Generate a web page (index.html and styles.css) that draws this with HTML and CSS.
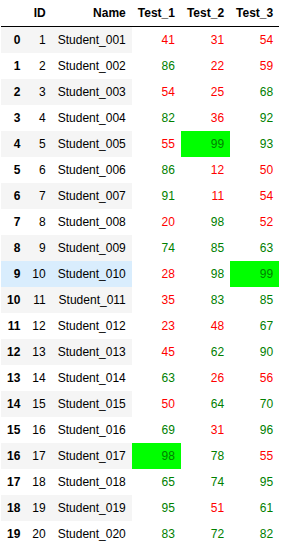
FILE: index.html
```html
<!DOCTYPE html>
<html>
<head>
<meta charset="utf-8">
<link rel="stylesheet" href="styles.css">
</head>
<body>
<table class="df">
<thead>
<tr><th class="blank"></th><th>ID</th><th>Name</th><th>Test_1</th><th>Test_2</th><th>Test_3</th></tr>
</thead>
<tbody>
<tr><th>0</th><td>1</td><td>Student_001</td><td class="s bad">41</td><td class="s bad">31</td><td class="s bad">54</td></tr>
<tr><th>1</th><td>2</td><td>Student_002</td><td class="s ok">86</td><td class="s bad">22</td><td class="s bad">59</td></tr>
<tr><th>2</th><td>3</td><td>Student_003</td><td class="s bad">54</td><td class="s bad">25</td><td class="s ok">68</td></tr>
<tr><th>3</th><td>4</td><td>Student_004</td><td class="s ok">82</td><td class="s bad">36</td><td class="s ok">92</td></tr>
<tr><th>4</th><td>5</td><td>Student_005</td><td class="s bad">55</td><td class="s ok max">99</td><td class="s ok">93</td></tr>
<tr><th>5</th><td>6</td><td>Student_006</td><td class="s ok">86</td><td class="s bad">12</td><td class="s bad">50</td></tr>
<tr><th>6</th><td>7</td><td>Student_007</td><td class="s ok">91</td><td class="s bad">11</td><td class="s bad">54</td></tr>
<tr><th>7</th><td>8</td><td>Student_008</td><td class="s bad">20</td><td class="s ok">98</td><td class="s bad">52</td></tr>
<tr><th>8</th><td>9</td><td>Student_009</td><td class="s ok">74</td><td class="s ok">85</td><td class="s ok">63</td></tr>
<tr class="hover"><th>9</th><td>10</td><td>Student_010</td><td class="s bad">28</td><td class="s ok">98</td><td class="s ok max">99</td></tr>
<tr><th>10</th><td>11</td><td>Student_011</td><td class="s bad">35</td><td class="s ok">83</td><td class="s ok">85</td></tr>
<tr><th>11</th><td>12</td><td>Student_012</td><td class="s bad">23</td><td class="s bad">48</td><td class="s ok">67</td></tr>
<tr><th>12</th><td>13</td><td>Student_013</td><td class="s bad">45</td><td class="s ok">62</td><td class="s ok">90</td></tr>
<tr><th>13</th><td>14</td><td>Student_014</td><td class="s ok">63</td><td class="s bad">26</td><td class="s bad">56</td></tr>
<tr><th>14</th><td>15</td><td>Student_015</td><td class="s bad">50</td><td class="s ok">64</td><td class="s ok">70</td></tr>
<tr><th>15</th><td>16</td><td>Student_016</td><td class="s ok">69</td><td class="s bad">31</td><td class="s ok">96</td></tr>
<tr><th>16</th><td>17</td><td>Student_017</td><td class="s ok max">98</td><td class="s ok">78</td><td class="s bad">55</td></tr>
<tr><th>17</th><td>18</td><td>Student_018</td><td class="s ok">65</td><td class="s ok">74</td><td class="s ok">95</td></tr>
<tr><th>18</th><td>19</td><td>Student_019</td><td class="s ok">95</td><td class="s bad">51</td><td class="s ok">61</td></tr>
<tr><th>19</th><td>20</td><td>Student_020</td><td class="s ok">83</td><td class="s ok">72</td><td class="s ok">82</td></tr>
</tbody>
</table>
</body>
</html>
```
FILE: styles.css
```css
html, body {
  margin: 0;
  padding: 0;
  background: #fff;
}
body {
  padding-left: 1px;
  font-family: "Liberation Sans", Arial, sans-serif;
  font-size: 12px;
  color: #000;
}
.df {
  border-collapse: collapse;
  border-spacing: 0;
  border: none;
  table-layout: auto;
}
.df th,
.df td {
  text-align: right;
  vertical-align: middle;
  padding: 6px;
  line-height: 14px;
  white-space: nowrap;
  border: none;
}
.df th {
  font-weight: bold;
}
.df thead {
  border-bottom: 1px solid #000;
}
.df thead th {
  vertical-align: bottom;
}
.df tbody tr:nth-child(odd) {
  background: #f5f5f5;
}
.df tbody tr.hover {
  background: rgb(217, 237, 253);
}
.df td.s {
  background: #fff;
}
.df td.bad {
  color: #ff0000;
}
.df td.ok {
  color: #008000;
}
.df td.max {
  background: #00ff00;
}
```
